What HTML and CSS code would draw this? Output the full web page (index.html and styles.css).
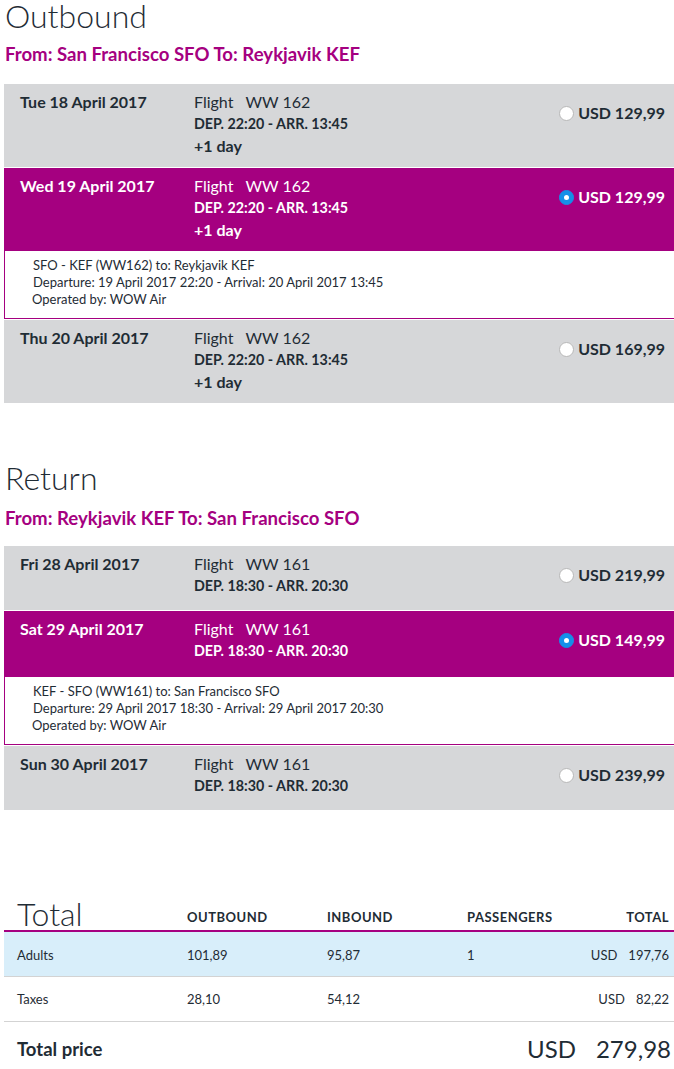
FILE: index.html
```html
<!DOCTYPE html>
<html lang="en">
<head>
<meta charset="utf-8">
<title>Flights</title>
<link rel="stylesheet" href="styles.css">
</head>
<body>
<div class="page">
  <section class="leg">
    <h1 class="leg-title">Outbound</h1>
    <h2 class="route">From: San Francisco SFO To: Reykjavik KEF</h2>
    <div class="flights">
      <div class="flight">
        <div class="date">Tue 18 April 2017</div>
        <div class="info">
          <div class="num">Flight <span class="code">WW 162</span></div>
          <div class="times">DEP. 22:20 - ARR. 13:45</div>
          <div class="plus">+1 day</div>
        </div>
        <div class="price"><span class="radio"></span>USD 129,99</div>
      </div>
      <div class="group">
        <div class="flight selected">
          <div class="date">Wed 19 April 2017</div>
          <div class="info">
            <div class="num">Flight <span class="code">WW 162</span></div>
            <div class="times">DEP. 22:20 - ARR. 13:45</div>
            <div class="plus">+1 day</div>
          </div>
          <div class="price"><span class="radio on"></span>USD 129,99</div>
        </div>
        <div class="details">
          <div>SFO - KEF (WW162) to: Reykjavik KEF</div>
          <div>Departure: 19 April 2017 22:20 - Arrival: 20 April 2017 13:45</div>
          <div class="op">Operated by: WOW Air</div>
        </div>
      </div>
      <div class="flight">
        <div class="date">Thu 20 April 2017</div>
        <div class="info">
          <div class="num">Flight <span class="code">WW 162</span></div>
          <div class="times">DEP. 22:20 - ARR. 13:45</div>
          <div class="plus">+1 day</div>
        </div>
        <div class="price"><span class="radio"></span>USD 169,99</div>
      </div>
    </div>
  </section>

  <section class="leg return">
    <h1 class="leg-title">Return</h1>
    <h2 class="route">From: Reykjavik KEF To: San Francisco SFO</h2>
    <div class="flights">
      <div class="flight short">
        <div class="date">Fri 28 April 2017</div>
        <div class="info">
          <div class="num">Flight <span class="code">WW 161</span></div>
          <div class="times">DEP. 18:30 - ARR. 20:30</div>
        </div>
        <div class="price"><span class="radio"></span>USD 219,99</div>
      </div>
      <div class="group">
        <div class="flight short selected">
          <div class="date">Sat 29 April 2017</div>
          <div class="info">
            <div class="num">Flight <span class="code">WW 161</span></div>
            <div class="times">DEP. 18:30 - ARR. 20:30</div>
          </div>
          <div class="price"><span class="radio on"></span>USD 149,99</div>
        </div>
        <div class="details">
          <div>KEF - SFO (WW161) to: San Francisco SFO</div>
          <div>Departure: 29 April 2017 18:30 - Arrival: 29 April 2017 20:30</div>
          <div class="op">Operated by: WOW Air</div>
        </div>
      </div>
      <div class="flight short">
        <div class="date">Sun 30 April 2017</div>
        <div class="info">
          <div class="num">Flight <span class="code">WW 161</span></div>
          <div class="times">DEP. 18:30 - ARR. 20:30</div>
        </div>
        <div class="price"><span class="radio"></span>USD 239,99</div>
      </div>
    </div>
  </section>

  <section class="totals">
    <div class="trow thead">
      <div class="tcell title">Total</div>
      <div class="tcell">OUTBOUND</div>
      <div class="tcell">INBOUND</div>
      <div class="tcell">PASSENGERS</div>
      <div class="tcell right">TOTAL</div>
    </div>
    <div class="trow adults">
      <div class="tcell">Adults</div>
      <div class="tcell">101,89</div>
      <div class="tcell">95,87</div>
      <div class="tcell">1</div>
      <div class="tcell right"><span class="cur">USD</span>197,76</div>
    </div>
    <div class="trow">
      <div class="tcell">Taxes</div>
      <div class="tcell">28,10</div>
      <div class="tcell">54,12</div>
      <div class="tcell"></div>
      <div class="tcell right"><span class="cur">USD</span>82,22</div>
    </div>
    <div class="grand">
      <div class="grand-label">Total price</div>
      <div class="grand-value"><span class="cur">USD</span>279,98</div>
    </div>
  </section>
</div>
</body>
</html>
```

FILE: styles.css
```css
html { overflow-x: hidden; }
body {
  margin: 0;
  font-family: "Lato", "Open Sans", sans-serif;
  color: #1f2c35;
  background: #fff;
}
.page {
  width: 672px;
  padding-left: 4px;
}
.leg-title {
  margin: 0;
  padding-left: 1px;
  font-size: 32px;
  font-weight: 300;
  line-height: 32px;
  color: #1f2c35;
}
.route {
  margin: 5px 0 0;
  padding-left: 1px;
  font-size: 18.6px;
  font-weight: 700;
  line-height: 34px;
  color: #a50080;
}
.flights {
  margin-top: 13px;
  display: flex;
  flex-direction: column;
  gap: 1px;
}
.flight {
  display: grid;
  grid-template-columns: 174px 1fr auto;
  background: #d6d7d9;
  padding: 8px 9px 11px 16px;
  min-height: 64px;
  box-sizing: border-box;
}
.flight.selected {
  background: #a50080;
  color: #fff;
}
.date {
  font-size: 16px;
  font-weight: 700;
  line-height: 20px;
}
.info {
  font-size: 16px;
  line-height: 21px;
}
.num { font-weight: 400; line-height: 20px; }
.code { margin-left: 8px; }
.times { font-size: 14.3px; font-weight: 700; line-height: 23px; }
.plus { font-weight: 700; line-height: 21px; }
.price {
  display: flex;
  align-items: center;
  gap: 4px;
  padding-top: 10px;
  font-size: 16px;
  font-weight: 700;
  height: 20px;
  padding-right: 2px;
}
.radio {
  width: 15px;
  height: 15px;
  border-radius: 50%;
  background: #fff;
  border: 1px solid #b8b8b8;
  box-sizing: border-box;
  display: inline-block;
  position: relative;
  top: 1px;
}
.radio.on {
  background: #1590e8;
  border-color: #1590e8;
}
.radio.on::after {
  content: "";
  position: absolute;
  left: 4px;
  top: 4px;
  width: 5px;
  height: 5px;
  border-radius: 50%;
  background: #fff;
}
.details {
  border-left: 1px solid #a50080;
  border-bottom: 1px solid #a50080;
  border-right: 1px solid #a50080;
  padding: 6px 0 10px 28px;
  font-size: 13px;
  line-height: 17px;
  color: #1f2c35;
}
.details .op { margin-left: -1px; }
.return { margin-top: 59px; }
.return .route { margin-top: 7px; }
.return .flights { margin-top: 11px; }
.return .selected { min-height: 66px; }
.totals {
  margin-top: 79px;
}
.trow {
  display: grid;
  grid-template-columns: 170px 140px 140px 1fr auto;
  align-items: center;
  height: 44px;
  padding: 0 7px 0 13px;
  border-bottom: 1px solid #d3d3d3;
  font-size: 13px;
}
.adults { padding-top: 2px; height: 42px; background: #d8eefa; }
.thead {
  height: 36px;
  align-items: end;
  border-bottom: 2px solid #a50080;
  font-weight: 700;
  font-size: 13px;
  letter-spacing: 0.5px;
  padding-bottom: 5px;
  padding-top: 0;
  box-sizing: content-box;
}
.thead .tcell { line-height: 16px; }
.thead .title {
  font-size: 32px;
  font-weight: 300;
  letter-spacing: 0;
  line-height: 36px;
  margin-bottom: -7px;
}
.right { text-align: right; }
.cur { margin-right: 11px; }
.grand {
  display: flex;
  justify-content: space-between;
  align-items: center;
  padding: 12px 5px 0 13px;
}
.grand-label { font-size: 18.5px; font-weight: 700; }
.grand-value { font-size: 24px; font-weight: 400; }
.grand-value .cur { margin-right: 20px; }
```
